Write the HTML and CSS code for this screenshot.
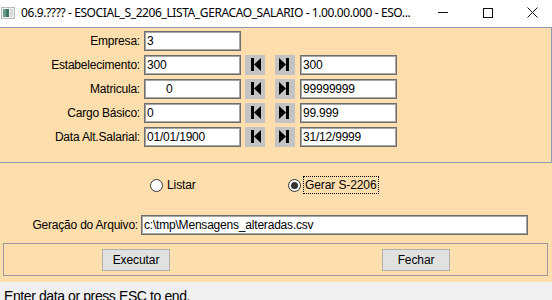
FILE: index.html
```html
<!DOCTYPE html>
<html lang="pt-BR">
<head>
    <meta charset="UTF-8">
    <meta name="viewport" content="width=device-width, initial-scale=1.0">
    <title>ESOCIAL_S_2206_LISTA_GERACAO_SALARIO</title>
    <link rel="stylesheet" href="styles.css">
</head>
<body>
    <div class="titlebar">
        <svg class="app-icon" width="14" height="12" viewBox="0 0 14 12">
            <rect x="0.5" y="0.5" width="13" height="11" fill="#f2f2f2" stroke="#b9b9b9"/>
            <rect x="2" y="2" width="6" height="8" fill="#3d7560"/>
            <rect x="2" y="2" width="3" height="8" fill="#6a9a86"/>
            <rect x="9" y="2" width="3" height="8" fill="#d8d8d8"/>
        </svg>
        <span class="title-text">06.9.???? - ESOCIAL_S_2206_LISTA_GERACAO_SALARIO - 1.00.00.000 - ESO...</span>
        <div class="controls">
            <span class="ctl">
                <svg width="10" height="10" viewBox="0 0 10 10"><path d="M0 4.5H10" stroke="#111" stroke-width="1"/></svg>
            </span>
            <span class="ctl">
                <svg width="10" height="10" viewBox="0 0 10 10"><rect x="0.5" y="0.5" width="9" height="9" fill="none" stroke="#111"/></svg>
            </span>
            <span class="ctl">
                <svg width="11" height="11" viewBox="0 0 11 11"><path d="M0.5 0.5L10.5 10.5M10.5 0.5L0.5 10.5" stroke="#111" stroke-width="1"/></svg>
            </span>
        </div>
    </div>

    <div class="main">
        <div class="params">
            <div class="row">
                <label class="lbl">Empresa:</label>
                <input class="field" type="text" value="3">
            </div>
            <div class="row">
                <label class="lbl">Estabelecimento:</label>
                <input class="field" type="text" value="300">
                <span class="nav first"><svg width="20" height="20" viewBox="0 0 20 20"><rect x="6" y="3" width="3" height="13"/><path d="M9 9.5L16 3V16Z"/></svg></span>
                <span class="nav last"><svg width="20" height="20" viewBox="0 0 20 20"><path d="M4 3L11 9.5L4 16Z"/><rect x="11" y="3" width="3" height="13"/></svg></span>
                <input class="field to" type="text" value="300">
            </div>
            <div class="row">
                <label class="lbl">Matricula:</label>
                <input class="field num" type="text" value="0">
                <span class="nav first"><svg width="20" height="20" viewBox="0 0 20 20"><rect x="6" y="3" width="3" height="13"/><path d="M9 9.5L16 3V16Z"/></svg></span>
                <span class="nav last"><svg width="20" height="20" viewBox="0 0 20 20"><path d="M4 3L11 9.5L4 16Z"/><rect x="11" y="3" width="3" height="13"/></svg></span>
                <input class="field to" type="text" value="99999999">
            </div>
            <div class="row">
                <label class="lbl">Cargo Básico:</label>
                <input class="field" type="text" value="0">
                <span class="nav first"><svg width="20" height="20" viewBox="0 0 20 20"><rect x="6" y="3" width="3" height="13"/><path d="M9 9.5L16 3V16Z"/></svg></span>
                <span class="nav last"><svg width="20" height="20" viewBox="0 0 20 20"><path d="M4 3L11 9.5L4 16Z"/><rect x="11" y="3" width="3" height="13"/></svg></span>
                <input class="field to" type="text" value="99.999">
            </div>
            <div class="row">
                <label class="lbl">Data Alt.Salarial:</label>
                <input class="field" type="text" value="01/01/1900">
                <span class="nav first"><svg width="20" height="20" viewBox="0 0 20 20"><rect x="6" y="3" width="3" height="13"/><path d="M9 9.5L16 3V16Z"/></svg></span>
                <span class="nav last"><svg width="20" height="20" viewBox="0 0 20 20"><path d="M4 3L11 9.5L4 16Z"/><rect x="11" y="3" width="3" height="13"/></svg></span>
                <input class="field to" type="text" value="31/12/9999">
            </div>
        </div>

        <div class="options">
            <div class="opt opt-list">
                <span class="radio"></span>
                <span class="opt-text">Listar</span>
            </div>
            <div class="opt">
                <span class="radio checked"></span>
                <span class="opt-text focused">Gerar S-2206</span>
            </div>
        </div>

        <div class="file-row">
            <label class="lbl file-lbl">Geração do Arquivo:</label>
            <input class="field file" type="text" value="c:\tmp\Mensagens_alteradas.csv">
        </div>

        <div class="actions">
            <button class="btn exec">Executar</button>
            <button class="btn close">Fechar</button>
        </div>
    </div>

    <div class="status">Enter data or press ESC to end.</div>
</body>
</html>
```

FILE: styles.css
```css
* {
    box-sizing: border-box;
}
body {
    margin: 0;
    width: 552px;
    height: 300px;
    overflow: hidden;
    font-family: "Liberation Sans", Arial, sans-serif;
    font-size: 12px;
    color: #000;
    background-color: #fddeac;
}
.titlebar {
    height: 27px;
    background-color: #fff;
    display: flex;
    align-items: center;
    overflow: hidden;
}
.app-icon {
    flex-shrink: 0;
    margin-left: 1px;
    margin-top: -2px;
}
.title-text {
    flex-shrink: 0;
    margin-left: 6px;
    font-family: "Noto Sans", sans-serif;
    font-size: 12px;
    letter-spacing: -0.4px;
    color: #000;
    white-space: nowrap;
    margin-top: -2px;
}
.controls {
    flex-shrink: 0;
    margin-left: auto;
    margin-right: -3px;
    display: flex;
    height: 27px;
}
.ctl {
    width: 45px;
    display: flex;
    align-items: center;
    justify-content: center;
    margin-top: -2px;
}
.main {
    height: 255px;
    background-color: #fddeac;
}
.params {
    height: 136px;
    border: 1px solid #8e9cb2;
    border-left: none;
    padding-top: 3px;
}
.row {
    display: flex;
    align-items: center;
    height: 20px;
    margin-bottom: 4px;
}
.lbl {
    width: 140px;
    margin-right: 4px;
    text-align: right;
    letter-spacing: -0.2px;
    white-space: nowrap;
}
.field {
    width: 97px;
    height: 20px;
    margin: 0;
    padding: 0 2px;
    border: 1px solid #6e6e6e;
    box-shadow: inset 0 0 0 1px #a6a6a6;
    background-color: #fff;
    font-family: "Liberation Sans", Arial, sans-serif;
    font-size: 12px;
    letter-spacing: -0.2px;
    color: #000;
    outline: none;
}
.num {
    text-indent: 19px;
}
.nav {
    width: 20px;
    height: 20px;
    background-color: #c3c3c3;
    display: block;
}
.nav svg {
    display: block;
    fill: #000;
}
.nav.first {
    margin-left: 4px;
}
.nav.last {
    margin-left: 10px;
}
.field.to {
    margin-left: 5px;
}
.options {
    display: flex;
    align-items: center;
    height: 20px;
    margin-top: 12px;
    padding-left: 150px;
}
.opt {
    display: flex;
    align-items: center;
}
.opt-list {
    width: 138px;
}
.radio {
    width: 13px;
    height: 13px;
    border: 1px solid #333;
    border-radius: 50%;
    background-color: #fff;
    display: flex;
    align-items: center;
    justify-content: center;
}
.radio.checked::after {
    content: "";
    width: 7px;
    height: 7px;
    border-radius: 50%;
    background-color: #333;
}
.opt-text {
    margin-left: 2px;
    padding: 1px 1px;
    border: 1px dotted transparent;
    letter-spacing: -0.1px;
}
.opt-text.focused {
    border-color: #000;
}
.file-row {
    display: flex;
    align-items: center;
    height: 20px;
    margin-top: 20px;
}
.file-lbl {
    width: 138px;
    margin-right: 3px;
}
.field.file {
    width: 387px;
}
.actions {
    margin: 8px 0 0 3px;
    width: 545px;
    height: 33px;
    border: 1px solid #999;
    padding-top: 5px;
    display: flex;
    align-items: flex-start;
}
.btn {
    width: 68px;
    height: 22px;
    background-color: #e1e1e1;
    border: 1px solid #adadad;
    font-family: "Liberation Sans", Arial, sans-serif;
    font-size: 12px;
    letter-spacing: -0.1px;
    color: #000;
    padding: 0;
}
.exec {
    margin-left: 98px;
}
.close {
    margin-left: 212px;
}
.status {
    height: 18px;
    background-color: #f0f0f0;
    padding: 5px 0 0 4px;
    font-size: 14px;
    line-height: 18px;
    letter-spacing: -0.4px;
    white-space: nowrap;
    overflow: hidden;
}
```
